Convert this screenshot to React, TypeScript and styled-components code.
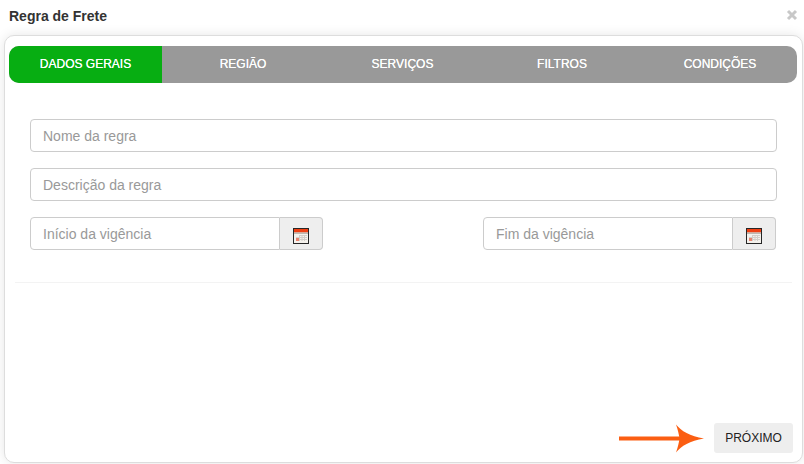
import React from "react";
import styled, { createGlobalStyle } from "styled-components";

const Global = createGlobalStyle`
  html, body { margin: 0; padding: 0; background: #fff; overflow: hidden; }
  * { box-sizing: border-box; }
  body { font-family: "Liberation Sans", Arial, sans-serif; }
`;

const Page = styled.div`
  width: 804px;
  height: 464px;
  display: flex;
  flex-direction: column;
  overflow: hidden;
  background: #fff;
`;

const Header = styled.header`
  height: 35px;
  flex: none;
  display: flex;
  align-items: center;
  justify-content: space-between;
  padding: 0 6px 3px 9px;
`;

const Title = styled.h1`
  margin: 0;
  font-size: 14px;
  font-weight: 700;
  color: #333;
`;

const Close = styled.button`
  border: 0;
  background: none;
  padding: 0;
  width: 12px;
  height: 12px;
  display: flex;
  margin-top: -2px;
`;

const Card = styled.main`
  margin: 0 1px 1px 4px;
  flex: 1;
  min-height: 0;
  display: flex;
  flex-direction: column;
  border: 1px solid #ddd;
  border-radius: 10px;
  background: #fff;
  box-shadow: 0 0 12px rgba(0, 0, 0, 0.1);
  padding: 10px 5px 9px 4px;
`;

const Tabs = styled.nav`
  display: grid;
  grid-template-columns: 153px 162px 157px 162px 154px;
  height: 37px;
  flex: none;
  border-radius: 10px;
  overflow: hidden;
  background: #999;
`;

const Tab = styled.div<{ $active?: boolean }>`
  display: flex;
  align-items: center;
  justify-content: center;
  padding-bottom: 2px;
  font-size: 12px;
  color: #fff;
  text-shadow: 0 0 0.4px #fff;
  background: ${(p) => (p.$active ? "#07ae12" : "transparent")};
`;

const Form = styled.form`
  display: flex;
  flex-direction: column;
  gap: 16px;
  padding: 36px 20px 0 21px;
`;

const Field = styled.input`
  width: 100%;
  height: 33px;
  padding: 0 12px;
  border: 1px solid #ccc;
  border-radius: 4px;
  font: 14px "Liberation Sans", Arial, sans-serif;
  color: #555;
  background: #fff;
  outline: none;
  &::placeholder { color: #999; opacity: 1; }
`;

const DateRow = styled.div`
  display: flex;
  justify-content: space-between;
  margin-right: 1px;
`;

const DateGroup = styled.div`
  display: flex;
  width: 293px;
  height: 33px;
`;

const DateInput = styled(Field)`
  flex: 1;
  width: auto;
  min-width: 0;
  border-radius: 4px 0 0 4px;
`;

const Addon = styled.button`
  width: 43px;
  flex: none;
  padding: 5px 0 0;
  display: flex;
  align-items: center;
  justify-content: center;
  border: 1px solid #ccc;
  border-left: 0;
  border-radius: 0 4px 4px 0;
  background: #eee;
`;

const Divider = styled.hr`
  margin: 32px 5px 0 6px;
  border: 0;
  border-top: 1px solid #f3f3f3;
`;

const Footer = styled.footer`
  margin-top: auto;
  display: flex;
  align-items: center;
  justify-content: flex-end;
  gap: 9px;
  margin-right: 4px;
`;

const NextButton = styled.button`
  width: 79px;
  height: 30px;
  border: 0;
  border-radius: 3px;
  background: #eee;
  color: #222;
  font: 12px "Liberation Sans", Arial, sans-serif;
`;

const CalendarIcon = () => (
  <svg width="16" height="16" viewBox="0 0 16 16" aria-hidden="true">
    <rect x="0.5" y="0.5" width="15" height="15" fill="#f4f1ec" stroke="#262626" />
    <rect x="1" y="1" width="14" height="3.5" fill="#ee3f12" />
    <rect x="1" y="4.5" width="14" height="1.5" fill="#bdb8b0" />
    <path d="M6 7.5h8M3 9.5h11M3 11.5h11M6.5 7v6M9 7v6M11.5 7v6" stroke="#d2cec8" strokeWidth="1" fill="none" />
    <rect x="3" y="10" width="3" height="3" fill="#e8836e" />
  </svg>
);

const CloseIcon = () => (
  <svg width="12" height="12" viewBox="0 0 12 12" aria-hidden="true">
    <path d="M2 2l8 8M10 2l-8 8" stroke="#c8c8c8" strokeWidth="3" fill="none" />
  </svg>
);

const ArrowIcon = () => (
  <svg width="87" height="30" viewBox="0 0 87 30" aria-hidden="true">
    <rect x="1" y="13.5" width="61" height="4" fill="#fb5e12" />
    <path d="M58 1.5C63 8 72 13 86 15.5 72 18 63 23 58 29.5 60 24 61 19 61.5 15.5 61 12 60 7 58 1.5Z" fill="#fb5e12" />
  </svg>
);

export default function App() {
  return (
    <Page>
      <Global />
      <Header>
        <Title>Regra de Frete</Title>
        <Close type="button" aria-label="Fechar"><CloseIcon /></Close>
      </Header>
      <Card>
        <Tabs>
          <Tab $active>DADOS GERAIS</Tab>
          <Tab>REGIÃO</Tab>
          <Tab>SERVIÇOS</Tab>
          <Tab>FILTROS</Tab>
          <Tab>CONDIÇÕES</Tab>
        </Tabs>
        <Form>
          <Field placeholder="Nome da regra" />
          <Field placeholder="Descrição da regra" />
          <DateRow>
            <DateGroup>
              <DateInput placeholder="Início da vigência" />
              <Addon type="button" aria-label="Calendário"><CalendarIcon /></Addon>
            </DateGroup>
            <DateGroup>
              <DateInput placeholder="Fim da vigência" />
              <Addon type="button" aria-label="Calendário"><CalendarIcon /></Addon>
            </DateGroup>
          </DateRow>
        </Form>
        <Divider />
        <Footer>
          <ArrowIcon />
          <NextButton type="button">PRÓXIMO</NextButton>
        </Footer>
      </Card>
    </Page>
  );
}
